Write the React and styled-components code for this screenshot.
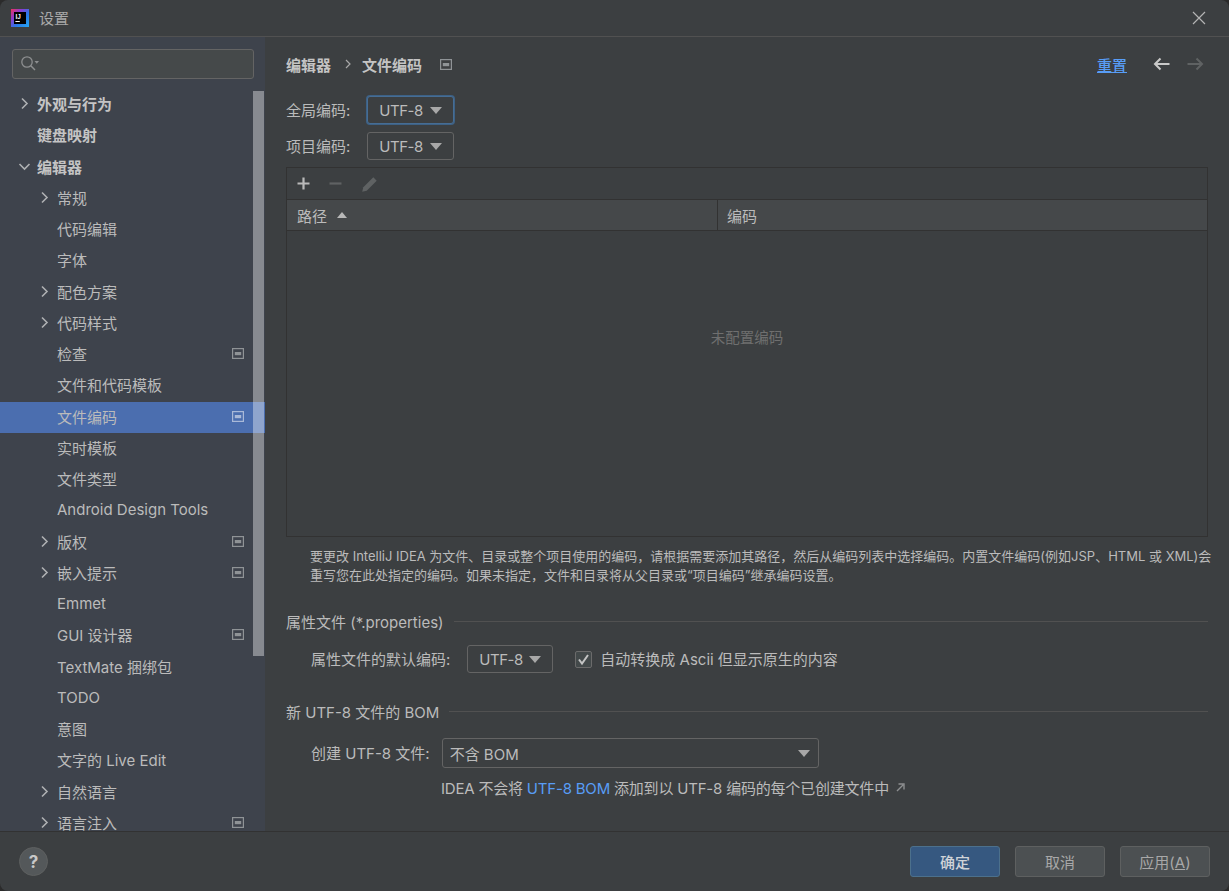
import React from "react";
import styled, { createGlobalStyle } from "styled-components";

const color = {
  panel: "#3c3f41",
  side: "#3e434c",
  line: "#323232",
  titleLine: "#515151",
  text: "#bbbbbb",
  dim: "#787878",
  link: "#589df6",
  field: "#45494a",
  fieldLine: "#646464",
  selected: "#4b6eaf",
};

const tree = [
  { title: "外观与行为", depth: 0, arrow: "right", bold: true },
  { title: "键盘映射", depth: 0, bold: true },
  { title: "编辑器", depth: 0, arrow: "down", bold: true },
  { title: "常规", depth: 1, arrow: "right" },
  { title: "代码编辑", depth: 1 },
  { title: "字体", depth: 1 },
  { title: "配色方案", depth: 1, arrow: "right" },
  { title: "代码样式", depth: 1, arrow: "right" },
  { title: "检查", depth: 1, badge: true },
  { title: "文件和代码模板", depth: 1 },
  { title: "文件编码", depth: 1, badge: true, selected: true },
  { title: "实时模板", depth: 1 },
  { title: "文件类型", depth: 1 },
  { title: "Android Design Tools", depth: 1 },
  { title: "版权", depth: 1, arrow: "right", badge: true },
  { title: "嵌入提示", depth: 1, arrow: "right", badge: true },
  { title: "Emmet", depth: 1 },
  { title: "GUI 设计器", depth: 1, badge: true },
  { title: "TextMate 捆绑包", depth: 1 },
  { title: "TODO", depth: 1 },
  { title: "意图", depth: 1 },
  { title: "文字的 Live Edit", depth: 1 },
  { title: "自然语言", depth: 1, arrow: "right" },
  { title: "语言注入", depth: 1, arrow: "right", badge: true },
];

const GlobalStyle = createGlobalStyle`
  html, body {
    margin: 0;
    height: 100%;
    background: #2b2b2b;
  }
  body {
    font-family: Inter, "Noto Sans CJK SC", sans-serif;
    font-size: 15px;
    color: ${color.text};
  }
  * {
    box-sizing: border-box;
  }
`;

const Dialog = styled.div`
  width: 1229px;
  height: 891px;
  display: flex;
  flex-direction: column;
  overflow: hidden;
  background: ${color.panel};
  border-radius: 8px;
`;

const TitleBar = styled.header`
  height: 37px;
  flex: none;
  display: flex;
  align-items: center;
  padding: 0 23px 0 11px;
  border-bottom: 1px solid ${color.titleLine};
`;

const TitleText = styled.span`
  margin: -2px 0 0 10px;
  font-size: 15px;
  color: #a9a9a9;
  flex: 1;
`;

const Body = styled.div`
  flex: 1;
  min-height: 0;
  display: flex;
`;

const Side = styled.aside`
  position: relative;
  width: 265px;
  flex: none;
  overflow: hidden;
  background: ${color.side};
`;

const SearchBox = styled.div`
  height: 30px;
  margin: 12px 11px 10px 12px;
  padding-left: 7px;
  display: flex;
  align-items: center;
  background: ${color.field};
  border: 1px solid ${color.fieldLine};
  border-radius: 3px;
`;

const Rows = styled.div`
  display: flex;
  flex-direction: column;
`;

const Row = styled.div`
  height: 31.25px;
  flex: none;
  display: flex;
  align-items: center;
  position: relative;
  padding: 0 0 2px ${(p) => 37 + p.$depth * 20}px;
  font-weight: ${(p) => (p.$bold ? 700 : 400)};
  background: ${(p) => (p.$selected ? color.selected : "transparent")};
  color: ${(p) => (p.$bold ? "#c4c4c4" : color.text)};
`;

const Arrow = styled.svg`
  position: absolute;
  left: ${(p) => 18 + p.$depth * 20}px;
  top: 8px;
`;

const BadgeSlot = styled.span`
  position: absolute;
  right: 21px;
  top: 9px;
  display: flex;
`;

const ScrollThumb = styled.div`
  position: absolute;
  left: 253px;
  top: 54px;
  width: 11px;
  height: 565px;
  background: rgba(255, 255, 255, 0.38);
`;

const Main = styled.main`
  flex: 1;
  min-width: 0;
  padding: 0 21px;
  display: flex;
  flex-direction: column;
  overflow: hidden;
`;

const Crumbs = styled.div`
  height: 55px;
  padding-bottom: 1px;
  flex: none;
  display: flex;
  align-items: center;
  font-weight: 700;
  color: #c4c4c4;
`;

const CrumbSep = styled.svg`
  margin: 0 11px 0 14px;
`;

const CrumbBadge = styled.span`
  display: flex;
  margin-left: 18px;
`;

const Spacer = styled.div`
  flex: 1;
`;

const Reset = styled.a`
  color: ${color.link};
  text-decoration: underline;
  font-weight: 500;
  margin-right: 26px;
`;

const NavArrows = styled.span`
  display: flex;
  align-items: center;
  gap: 17px;
  margin-right: 4px;
`;

const EncodingRow = styled.div`
  height: 36px;
  flex: none;
  display: flex;
  align-items: center;
  gap: 17px;
`;

const FieldLabel = styled.span`
  margin-top: -2px;
`;

const Combo = styled.div`
  width: ${(p) => p.$width}px;
  height: ${(p) => (p.$tall ? 30 : 28)}px;
  flex: none;
  display: flex;
  align-items: center;
  justify-content: space-between;
  padding: ${(p) => (p.$tall ? "0 8px 0 7px" : "0 11px 0 11px")};
  letter-spacing: ${(p) => (p.$tall ? "0" : "-0.5px")};
  background: ${color.panel};
  border: 1px solid ${color.fieldLine};
  border-radius: 3px;
  ${(p) =>
    p.$focus &&
    `border-color: #466d94;
     box-shadow: 0 0 0 1px #3d6185;`}
`;

const Caret = styled.span`
  width: 0;
  height: 0;
  border-left: 6px solid transparent;
  border-right: 6px solid transparent;
  border-top: 7px solid #a8a8a8;
  margin-top: 1px;
`;

const Table = styled.section`
  height: 370px;
  flex: none;
  margin-top: 3px;
  display: flex;
  flex-direction: column;
  border: 1px solid ${color.line};
`;

const ToolBar = styled.div`
  height: 32px;
  flex: none;
  padding-left: 9px;
  display: flex;
  align-items: center;
  gap: 17px;
  border-bottom: 1px solid ${color.line};
`;

const TableHead = styled.div`
  height: 31px;
  flex: none;
  display: flex;
  background: #45484a;
  border-bottom: 1px solid ${color.line};
`;

const HeadCell = styled.div`
  display: flex;
  align-items: center;
  gap: 10px;
  padding-left: ${(p) => (p.$first ? 10 : 9)}px;
  width: ${(p) => (p.$first ? "431px" : "auto")};
  flex: ${(p) => (p.$first ? "none" : 1)};
  border-right: ${(p) => (p.$first ? `1px solid ${color.line}` : "none")};
`;

const SortUp = styled.span`
  width: 0;
  height: 0;
  border-left: 5.5px solid transparent;
  border-right: 5.5px solid transparent;
  border-bottom: 6px solid #b8b8b8;
`;

const TableEmpty = styled.div`
  flex: 1;
  display: flex;
  align-items: center;
  justify-content: center;
  padding-bottom: 94px;
  color: #6f6f6f;
  font-size: 14.5px;
`;

const Hint = styled.p`
  margin: 10px -4px 0 24px;
  font-size: 13px;
  line-height: 19px;
  color: #bbbbbb;
`;

const SectionTitle = styled.div`
  display: flex;
  align-items: center;
  gap: 10px;
  height: 22px;
  flex: none;
  margin-top: ${(p) => p.$top}px;
  &::after {
    content: "";
    flex: 1;
    height: 1px;
    background: #515151;
  }
`;

const OptionRow = styled.div`
  display: flex;
  align-items: center;
  flex: none;
  height: 30px;
  margin: ${(p) => p.$top}px 0 0 25px;
  gap: ${(p) => p.$gap}px;
`;

const CheckLabel = styled.label`
  display: flex;
  align-items: center;
  gap: 8px;
  margin-left: 5px;
`;

const CheckBox = styled.span`
  width: 17px;
  height: 17px;
  display: flex;
  align-items: center;
  justify-content: center;
  background: #43494a;
  border: 1px solid #6b6b6b;
  border-radius: 2px;
`;

const Note = styled.div`
  display: flex;
  align-items: center;
  margin: 8px 0 0 155px;
  height: 22px;
  flex: none;
  gap: 7px;
  letter-spacing: -0.2px;
`;

const InlineLink = styled.span`
  color: ${color.link};
`;

const Footer = styled.footer`
  height: 60px;
  flex: none;
  display: flex;
  align-items: center;
  padding: 0 19px 0 19px;
  border-top: 1px solid ${color.line};
`;

const HelpButton = styled.span`
  width: 29px;
  height: 29px;
  display: flex;
  align-items: center;
  justify-content: center;
  border-radius: 50%;
  background: #54585a;
  border: 1px solid #5e6060;
  font-weight: 700;
  font-size: 17px;
  color: #c8c8c8;
`;

const Button = styled.button`
  width: 90px;
  height: 31px;
  margin-left: 15px;
  padding: 0;
  font: inherit;
  color: ${(p) => (p.$primary ? "#cfd3d8" : "#a8a8a8")};
  font-weight: ${(p) => (p.$primary ? 500 : 400)};
  background: ${(p) => (p.$primary ? "#365880" : "#4c5052")};
  border: 1px solid ${(p) => (p.$primary ? "#4c708c" : "#5e6060")};
  border-radius: 3px;
`;

function ProjectBadge({ light }) {
  const c = light ? "#a9b9d8" : "#8f9396";
  return (
    <svg width="12" height="11" viewBox="0 0 12 11">
      <rect x="0.6" y="0.6" width="10.8" height="9.8" fill="none" stroke={c} strokeWidth="1.2" />
      <rect x="2.8" y="4" width="6.4" height="3.2" fill={c} />
    </svg>
  );
}

function TreeArrow({ dir, depth }) {
  return (
    <Arrow $depth={depth} width="13" height="13" viewBox="0 0 13 13">
      <path
        d={dir === "down" ? "M1.5 4 L6.5 9 L11.5 4" : "M4 1.5 L9 6.5 L4 11.5"}
        fill="none"
        stroke="#aeb0b2"
        strokeWidth="1.6"
      />
    </Arrow>
  );
}

function AppLogo() {
  return (
    <svg width="18" height="18" viewBox="0 0 18 18">
      <defs>
        <linearGradient id="ij" x1="0" y1="0" x2="1" y2="1">
          <stop offset="0" stopColor="#f0325c" />
          <stop offset="0.3" stopColor="#8d3bd0" />
          <stop offset="0.6" stopColor="#2a78e8" />
          <stop offset="1" stopColor="#25a6f0" />
        </linearGradient>
      </defs>
      <rect width="18" height="18" fill="url(#ij)" />
      <rect x="3" y="3" width="12" height="12" fill="#000" />
      <text x="4.4" y="9.6" fontSize="6.4" fontWeight="700" fill="#fff" fontFamily="Liberation Sans, sans-serif">
        IJ
      </text>
      <rect x="4.4" y="12" width="4.4" height="1" fill="#fff" />
    </svg>
  );
}

function App() {
  return (
    <>
      <GlobalStyle />
      <Dialog>
        <TitleBar>
          <AppLogo />
          <TitleText>设置</TitleText>
          <svg width="14" height="14" viewBox="0 0 14 14">
            <path d="M1 1 L13 13 M13 1 L1 13" stroke="#b4b4b4" strokeWidth="1.2" fill="none" />
          </svg>
        </TitleBar>
        <Body>
          <Side>
            <SearchBox>
              <svg width="20" height="18" viewBox="0 0 20 18">
                <circle cx="7" cy="7" r="5.2" fill="none" stroke="#8d8f90" strokeWidth="1.3" />
                <path d="M10.8 10.8 L15 15" stroke="#8d8f90" strokeWidth="1.5" />
                <path d="M14.5 6 L19 6 L16.75 8.8 Z" fill="#8d8f90" />
              </svg>
            </SearchBox>
            <Rows>
              {tree.map((item) => (
                <Row key={item.title} $depth={item.depth} $bold={item.bold} $selected={item.selected}>
                  {item.arrow && <TreeArrow dir={item.arrow} depth={item.depth} />}
                  {item.title}
                  {item.badge && (
                    <BadgeSlot>
                      <ProjectBadge light={item.selected} />
                    </BadgeSlot>
                  )}
                </Row>
              ))}
            </Rows>
            <ScrollThumb />
          </Side>
          <Main>
            <Crumbs>
              编辑器
              <CrumbSep width="6" height="10" viewBox="0 0 6 10">
                <path d="M1 1 L5 5 L1 9" fill="none" stroke="#a8a8a8" strokeWidth="1.2" />
              </CrumbSep>
              文件编码
              <CrumbBadge>
                <ProjectBadge />
              </CrumbBadge>
              <Spacer />
              <Reset>重置</Reset>
              <NavArrows>
                <svg width="17" height="14" viewBox="0 0 17 14">
                  <path d="M16.5 7 L2 7 M7.5 1.5 L2 7 L7.5 12.5" fill="none" stroke="#c9c9c9" strokeWidth="2" />
                </svg>
                <svg width="17" height="14" viewBox="0 0 17 14">
                  <path d="M0.5 7 L15 7 M9.5 1.5 L15 7 L9.5 12.5" fill="none" stroke="#5f6263" strokeWidth="2" />
                </svg>
              </NavArrows>
            </Crumbs>
            <EncodingRow>
              <FieldLabel>全局编码:</FieldLabel>
              <Combo $width={87} $focus>
                UTF-8
                <Caret />
              </Combo>
            </EncodingRow>
            <EncodingRow>
              <FieldLabel>项目编码:</FieldLabel>
              <Combo $width={87}>
                UTF-8
                <Caret />
              </Combo>
            </EncodingRow>
            <Table>
              <ToolBar>
                <svg width="15" height="15" viewBox="0 0 15 15">
                  <path d="M7.5 1.5 L7.5 13.5 M1.5 7.5 L13.5 7.5" stroke="#b9b9b9" strokeWidth="2.2" />
                </svg>
                <svg width="15" height="15" viewBox="0 0 15 15">
                  <path d="M1.5 7.5 L13.5 7.5" stroke="#5f6263" strokeWidth="2.2" />
                </svg>
                <svg width="20" height="20" viewBox="0 0 18 18">
                  <path d="M2 16 L3 12 L12 3 L15 6 L6 15 Z" fill="#5f6263" />
                </svg>
              </ToolBar>
              <TableHead>
                <HeadCell $first>
                  路径
                  <SortUp />
                </HeadCell>
                <HeadCell>编码</HeadCell>
              </TableHead>
              <TableEmpty>未配置编码</TableEmpty>
            </Table>
            <Hint>
              要更改 IntelliJ IDEA 为文件、目录或整个项目使用的编码，请根据需要添加其路径，然后从编码列表中选择编码。内置文件编码(例如JSP、HTML 或 XML)会重写您在此处指定的编码。如果未指定，文件和目录将从父目录或“项目编码”继承编码设置。
            </Hint>
            <SectionTitle $top={25}>属性文件 (*.properties)</SectionTitle>
            <OptionRow $top={12} $gap={17}>
              <FieldLabel>属性文件的默认编码:</FieldLabel>
              <Combo $width={86}>
                UTF-8
                <Caret />
              </Combo>
              <CheckLabel>
                <CheckBox>
                  <svg width="13" height="13" viewBox="0 0 13 13">
                    <path d="M2 6.5 L5 10.5 L11 2" fill="none" stroke="#c4c4c4" strokeWidth="2" />
                  </svg>
                </CheckBox>
                <FieldLabel>自动转换成 Ascii 但显示原生的内容</FieldLabel>
              </CheckLabel>
            </OptionRow>
            <SectionTitle $top={26}>新 UTF-8 文件的 BOM</SectionTitle>
            <OptionRow $top={16} $gap={12}>
              <FieldLabel>创建 UTF-8 文件:</FieldLabel>
              <Combo $width={377} $tall>
                不含 BOM
                <Caret />
              </Combo>
            </OptionRow>
            <Note>
              <span>
                IDEA 不会将 <InlineLink>UTF-8 BOM</InlineLink> 添加到以 UTF-8 编码的每个已创建文件中
              </span>
              <svg width="9" height="9" viewBox="0 0 9 9">
                <path d="M1 8 L7 2 M2.5 1 L8 1 L8 6.5" fill="none" stroke="#8d8f90" strokeWidth="1.4" />
              </svg>
            </Note>
          </Main>
        </Body>
        <Footer>
          <HelpButton>?</HelpButton>
          <Spacer />
          <Button $primary>确定</Button>
          <Button>取消</Button>
          <Button>
            应用(<u>A</u>)
          </Button>
        </Footer>
      </Dialog>
    </>
  );
}

export default App;
